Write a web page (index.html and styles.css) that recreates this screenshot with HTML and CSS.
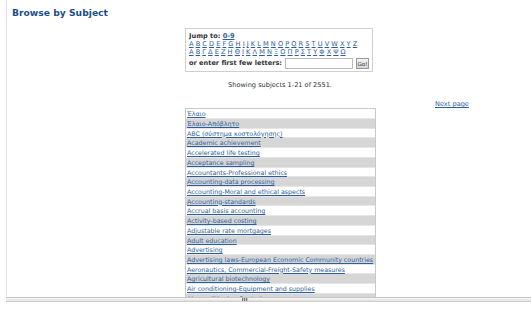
FILE: index.html
```html
<!DOCTYPE html>
<html lang="en">
<head>
    <meta charset="UTF-8">
    <title>Browse by Subject</title>
    <link rel="stylesheet" href="styles.css">
</head>
<body>
    <div class="frame">
        <h1 class="title">Browse by Subject</h1>

        <div class="jump">
            <div class="jump-head">Jump to: <a href="#">0-9</a></div>
            <div class="letters">
                <a href="#">A</a> <a href="#">B</a> <a href="#">C</a> <a href="#">D</a> <a href="#">E</a> <a href="#">F</a> <a href="#">G</a> <a href="#">H</a> <a href="#">I</a> <a href="#">J</a> <a href="#">K</a> <a href="#">L</a> <a href="#">M</a> <a href="#">N</a> <a href="#">O</a> <a href="#">P</a> <a href="#">Q</a> <a href="#">R</a> <a href="#">S</a> <a href="#">T</a> <a href="#">U</a> <a href="#">V</a> <a href="#">W</a> <a href="#">X</a> <a href="#">Y</a> <a href="#">Z</a>
            </div>
            <div class="letters">
                <a href="#">Α</a> <a href="#">Β</a> <a href="#">Γ</a> <a href="#">Δ</a> <a href="#">Ε</a> <a href="#">Ζ</a> <a href="#">Η</a> <a href="#">Θ</a> <a href="#">Ι</a> <a href="#">Κ</a> <a href="#">Λ</a> <a href="#">Μ</a> <a href="#">Ν</a> <a href="#">Ξ</a> <a href="#">Ο</a> <a href="#">Π</a> <a href="#">Ρ</a> <a href="#">Σ</a> <a href="#">Τ</a> <a href="#">Υ</a> <a href="#">Φ</a> <a href="#">Χ</a> <a href="#">Ψ</a> <a href="#">Ω</a>
            </div>
            <form class="starts" onsubmit="return false">
                <label for="starts_with">or enter first few letters:</label>
                <input type="text" id="starts_with">
                <button type="submit">Go!</button>
            </form>
        </div>

        <p class="showing">Showing subjects 1-21 of 2551.</p>

        <div class="next"><a href="#">Next page</a></div>

        <ul class="subjects">
            <li><a href="#">Έλαιο</a></li>
            <li><a href="#">Έλαιο-Απόβλητο</a></li>
            <li><a href="#">ABC (σύστημα κοστολόγησης)</a></li>
            <li><a href="#">Academic achievement</a></li>
            <li><a href="#">Accelerated life testing</a></li>
            <li><a href="#">Acceptance sampling</a></li>
            <li><a href="#">Accountants-Professional ethics</a></li>
            <li><a href="#">Accounting-data processing</a></li>
            <li><a href="#">Accounting-Moral and ethical aspects</a></li>
            <li><a href="#">Accounting-standards</a></li>
            <li><a href="#">Accrual basis accounting</a></li>
            <li><a href="#">Activity-based costing</a></li>
            <li><a href="#">Adjustable rate mortgages</a></li>
            <li><a href="#">Adult education</a></li>
            <li><a href="#">Advertising</a></li>
            <li><a href="#">Advertising laws-European Economic Community countries</a></li>
            <li><a href="#">Aeronautics, Commercial-Freight-Safety measures</a></li>
            <li><a href="#">Agricultural biotechnology</a></li>
            <li><a href="#">Air conditioning-Equipment and supplies</a></li>
            <li><a href="#">Air conditioning-Control</a></li>
            <li><a href="#">Air pollution</a></li>
        </ul>
    </div>

    <div class="hbar"><span class="grip"></span></div>
</body>
</html>
```

FILE: styles.css
```css
* {
    margin: 0;
    padding: 0;
    box-sizing: border-box;
}

html, body {
    background: #fff;
    overflow: hidden;
}

body {
    font-family: 'DejaVu Sans', Verdana, sans-serif;
    font-size: 6.6px;
    color: #333;
}

a {
    color: #2d5e9c;
}

.frame {
    margin-left: 6px;
    width: 547px;
    height: 297px;
    border-left: 1px solid #e2e2e2;
    overflow: hidden;
}

.title {
    font-size: 9.2px;
    font-weight: bold;
    color: #1d4f8b;
    line-height: 11px;
    padding: 7px 0 0 5px;
}

.jump {
    width: 188px;
    margin: 10px 0 0 178px;
    padding: 3px 3px 2px 3px;
    border: 1px solid #cfcfcf;
    font-weight: bold;
    line-height: 7.4px;
}

.jump-head {
    padding-top: 1px;
    margin-bottom: 1px;
}

.letters {
    font-weight: normal;
    white-space: nowrap;
}

.starts {
    display: flex;
    align-items: center;
    margin-top: 2px;
}

.starts label {
    font-weight: bold;
    white-space: nowrap;
    flex-shrink: 0;
}

.starts input {
    flex: 1;
    min-width: 0;
    height: 11px;
    margin-left: 3px;
    border: 1px solid #bbb;
    font-size: 6.6px;
}

.starts button {
    flex-shrink: 0;
    width: 13px;
    height: 11px;
    margin-left: 3px;
    border: 1px solid #999;
    background: linear-gradient(#f4f4f4, #d4d4d4);
    font-family: 'DejaVu Sans', Verdana, sans-serif;
    font-size: 5.5px;
    color: #333;
}

.showing {
    text-align: center;
    margin-top: 9px;
    line-height: 8px;
}

.next {
    padding-left: 428px;
    margin-top: 11px;
    line-height: 8px;
}

.subjects {
    list-style: none;
    width: 191px;
    margin: 0 0 0 178px;
    border: 1px solid #c9c9c9;
    font-size: 6.3px;
}

.subjects li {
    height: 9.72px;
    line-height: 9.72px;
    padding-left: 1px;
    white-space: nowrap;
    border-bottom: 1px solid #e6e6e6;
}

.subjects li:nth-child(even) {
    background: #d6d6d6;
}

.hbar {
    margin-left: 6px;
    height: 5px;
    border-top: 1px solid #c4c4c4;
    border-bottom: 1px solid #d0d0d0;
    background: linear-gradient(#fafafa, #dedede);
    display: flex;
    padding-left: 236px;
}

.grip {
    width: 6px;
    height: 3px;
    background: repeating-linear-gradient(90deg, #777 0 1px, #ccc 1px 2px);
}
```
